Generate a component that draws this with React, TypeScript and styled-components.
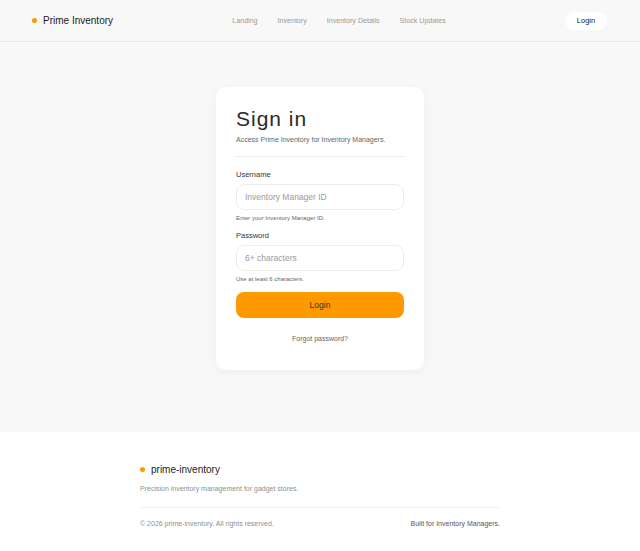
import styled, { createGlobalStyle } from "styled-components";

const colors = {
  pageBg: "#f8f8f8",
  white: "#ffffff",
  border: "#e8e8e8",
  text: "#222222",
  textSecondary: "#666666",
  textMuted: "#8f8f8f",
  accent: "#ff9900",
};

const NAV_LINKS = ["Landing", "Inventory", "Inventory Details", "Stock Updates"];

const GlobalStyle = createGlobalStyle`
  * {
    box-sizing: border-box;
  }

  body {
    margin: 0;
    background: ${colors.pageBg};
    font-family: "Liberation Sans", Arial, sans-serif;
    color: ${colors.text};
  }
`;

const StyledHeader = styled.header`
  height: 42px;
  display: flex;
  align-items: center;
  justify-content: space-between;
  padding: 0 33px 0 32px;
  border-bottom: 1px solid ${colors.border};
  background: ${colors.pageBg};
`;

const StyledBrand = styled.div<{ $size: number }>`
  display: flex;
  align-items: center;
  gap: ${({ $size }) => Math.round($size * 0.55)}px;
  font-size: ${({ $size }) => $size}px;
  color: ${colors.text};
`;

const StyledDot = styled.span`
  width: 5px;
  height: 5px;
  border-radius: 50%;
  background: ${colors.accent};
`;

const StyledNav = styled.nav`
  display: flex;
  gap: 20px;
  font-size: 7.1px;
  color: #999999;
`;

const StyledHeaderButton = styled.button`
  height: 18px;
  width: 42px;
  border: none;
  border-radius: 9px;
  background: ${colors.white};
  font-family: inherit;
  font-size: 7.5px;
  color: ${colors.text};
  padding: 0;
`;

const StyledMain = styled.main`
  display: flex;
  justify-content: center;
  padding: 45px 0 62px;
`;

const StyledCard = styled.section`
  width: 208px;
  background: ${colors.white};
  border-radius: 10px;
  box-shadow: 0 2px 10px rgba(0, 0, 0, 0.05);
  padding: 19px 20px 28px;
`;

const StyledTitle = styled.h1`
  margin: 0;
  font-size: 21px;
  font-weight: 400;
  letter-spacing: 1px;
  line-height: 26px;
  color: #2a2a2a;
`;

const StyledSubtitle = styled.p`
  margin: 4px 0 0;
  font-size: 7px;
  color: ${colors.textSecondary};
  padding-bottom: 13px;
  border-bottom: 1px solid #ececec;
`;

const StyledField = styled.div<{ $top: number }>`
  margin-top: ${({ $top }) => $top}px;
  display: flex;
  flex-direction: column;
`;

const StyledLabel = styled.label`
  font-size: 7.5px;
  color: #333333;
  line-height: 9px;
`;

const StyledInput = styled.input`
  margin-top: 5px;
  height: 26px;
  border: 1px solid #ececec;
  border-radius: 8px;
  padding: 0 8px;
  font-family: inherit;
  font-size: 8.5px;
  color: ${colors.text};
  background: ${colors.white};
  outline: none;

  &::placeholder {
    color: #9a9a9a;
  }
`;

const StyledHint = styled.span`
  margin-top: 4px;
  font-size: 6px;
  color: ${colors.textSecondary};
  line-height: 8px;
`;

const StyledSubmit = styled.button`
  margin-top: 9px;
  width: 100%;
  height: 26px;
  border: none;
  border-radius: 8px;
  background: ${colors.accent};
  font-family: inherit;
  font-size: 8.5px;
  color: #333333;
`;

const StyledForgot = styled.div`
  margin-top: 17px;
  text-align: center;
  font-size: 7px;
  color: ${colors.textSecondary};
`;

const StyledFooter = styled.footer`
  background: ${colors.white};
  padding: 32px 0 40px;
`;

const StyledFooterInner = styled.div`
  width: 360px;
  margin: 0 auto;
`;

const StyledTagline = styled.p`
  margin: 10px 0 0;
  font-size: 7px;
  color: ${colors.textMuted};
  padding-bottom: 15px;
  border-bottom: 1px solid #efefef;
`;

const StyledFooterBottom = styled.div`
  display: flex;
  justify-content: space-between;
  margin-top: 12px;
  font-size: 7px;
`;

const StyledFooterText = styled.span<{ $strong?: boolean }>`
  color: ${({ $strong }) => ($strong ? "#555555" : colors.textMuted)};
`;

export default function App() {
  return (
    <>
      <GlobalStyle />
      <StyledHeader>
        <StyledBrand $size={10}>
          <StyledDot />
          Prime Inventory
        </StyledBrand>
        <StyledNav>
          {NAV_LINKS.map((link) => (
            <span key={link}>{link}</span>
          ))}
        </StyledNav>
        <StyledHeaderButton>Login</StyledHeaderButton>
      </StyledHeader>

      <StyledMain>
        <StyledCard>
          <StyledTitle>Sign in</StyledTitle>
          <StyledSubtitle>Access Prime Inventory for Inventory Managers.</StyledSubtitle>

          <StyledField $top={13}>
            <StyledLabel>Username</StyledLabel>
            <StyledInput placeholder="Inventory Manager ID" />
            <StyledHint>Enter your Inventory Manager ID.</StyledHint>
          </StyledField>

          <StyledField $top={9}>
            <StyledLabel>Password</StyledLabel>
            <StyledInput type="password" placeholder="6+ characters" />
            <StyledHint>Use at least 6 characters.</StyledHint>
          </StyledField>

          <StyledSubmit>Login</StyledSubmit>
          <StyledForgot>Forgot password?</StyledForgot>
        </StyledCard>
      </StyledMain>

      <StyledFooter>
        <StyledFooterInner>
          <StyledBrand $size={10}>
            <StyledDot />
            prime-inventory
          </StyledBrand>
          <StyledTagline>Precision inventory management for gadget stores.</StyledTagline>
          <StyledFooterBottom>
            <StyledFooterText>© 2026 prime-inventory. All rights reserved.</StyledFooterText>
            <StyledFooterText $strong>Built for Inventory Managers.</StyledFooterText>
          </StyledFooterBottom>
        </StyledFooterInner>
      </StyledFooter>
    </>
  );
}
